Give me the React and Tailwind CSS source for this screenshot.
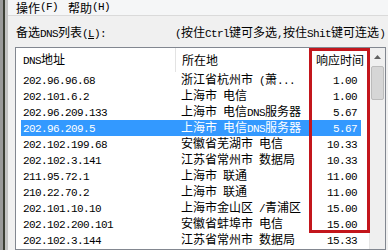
import React from 'react';

const rows = [
  ['202.96.96.68', '浙江省杭州市 (萧...', '1.00'],
  ['202.101.6.2', '上海市 电信', '1.00'],
  ['202.96.209.133', '上海市 电信DNS服务器', '5.67'],
  ['202.96.209.5', '上海市 电信DNS服务器', '5.67'],
  ['202.102.199.68', '安徽省芜湖市 电信', '10.33'],
  ['202.102.3.141', '江苏省常州市 数据局', '10.33'],
  ['211.95.72.1', '上海市 联通', '11.00'],
  ['210.22.70.2', '上海市 联通', '11.00'],
  ['202.101.10.10', '上海市金山区 /青浦区', '15.00'],
  ['202.102.200.101', '安徽省蚌埠市 电信', '15.00'],
  ['202.102.3.144', '江苏省常州市 数据局', '15.33'],
];

// ASCII runs in a 6px-wide mono, CJK in Noto
const Mix = ({ s }) =>
  s.split(/([\x20-\x7e]+)/).map((p, i) =>
    /^[\x20-\x7e]+$/.test(p) ? (
      <span key={i} className="font-['Liberation_Mono',monospace] text-[11px] tracking-[-0.6px] whitespace-pre">
        {p}
      </span>
    ) : (
      <span key={i}>{p}</span>
    )
  );

export default function App() {
  return (
    <div className="w-[388px] h-[250px] overflow-hidden relative flex bg-[#f0f0f0] text-black font-['Noto_Sans_CJK_SC',sans-serif] text-[12px] leading-[16px]">
      {/* window edge */}
      <div className="flex shrink-0">
        <div className="w-[3px] bg-[#9a9a9a]" />
        <div className="w-[2px] bg-[#3b3e34]" />
        <div className="w-[3px] bg-[#c4c4c4]" />
      </div>

      <div className="flex-1 flex flex-col min-w-0">
        {/* Menu */}
        <div className="h-[16px] flex items-center gap-[10px] pl-[8px] bg-[#f5f6f7] border-b border-[#dadada] leading-[15px]">
          <span className="flex items-center h-[15px]"><Mix s="操作(F)" /></span>
          <span className="flex items-center h-[15px]"><Mix s="帮助(H)" /></span>
        </div>

        {/* Label */}
        <div className="mt-[8px] h-[16px] flex pl-[8px]">
          <span className="w-[159px] shrink-0">
            备选<Mix s="DNS" />列表<Mix s="(" /><span className="underline"><Mix s="L" /></span><Mix s="):" />
          </span>
          <span className="whitespace-nowrap">
            <Mix s="(按住Ctrl键可多选,按住Shit键可连选)" />
          </span>
        </div>

        {/* List box */}
        <div className="mt-[7px] ml-[7px] w-[371px] flex-1 bg-white border border-[#828790] flex">
          <div className="flex-1 flex flex-col">
            <div className="h-[24px] flex items-center shrink-0">
              <div className="w-[159px] pl-[7px]"><Mix s="DNS" />地址</div>
              <div className="w-px h-full bg-[#e3e3e3]" />
              <div className="w-[133px] pl-[6px]">所在地</div>
              <div className="flex-1 text-right pr-[5px]">响应时间</div>
            </div>
            {rows.map(([ip, loc, t], i) => {
              const sel = i === 3;
              return (
                <div key={ip} className="h-[16px] pl-[5px] pr-[8px] shrink-0">
                  <div className={`h-full flex items-center ${sel ? 'bg-[#3399ff] text-white' : ''}`}>
                    <div className="w-[154px] pl-[2px] whitespace-nowrap"><Mix s={ip} /></div>
                    <div className="w-[134px] pl-[6px] whitespace-nowrap overflow-hidden"><Mix s={loc} /></div>
                    <div className="flex-1 text-right pr-[4px]"><Mix s={t} /></div>
                  </div>
                </div>
              );
            })}
          </div>

          {/* Scrollbar */}
          <div className="w-[16px] shrink-0 bg-[#efefef] border-l border-[#e6e6e6] flex flex-col">
            <div className="h-[18px] flex items-center justify-center">
              <svg width="7" height="4" viewBox="0 0 7 4">
                <path d="M3.5 0 L7 4 L0 4 Z" fill="#606060" />
              </svg>
            </div>
            <div className="mx-[1px] h-[34px] bg-[#d6d6d6] border border-[#bcbcbc] rounded-[2px]" />
          </div>
        </div>
      </div>

      {/* red annotation box */}
      <div className="absolute left-[309px] top-[48px] w-[61px] h-[185px] border-[3px] border-[#c3161c]" />
    </div>
  );
}
